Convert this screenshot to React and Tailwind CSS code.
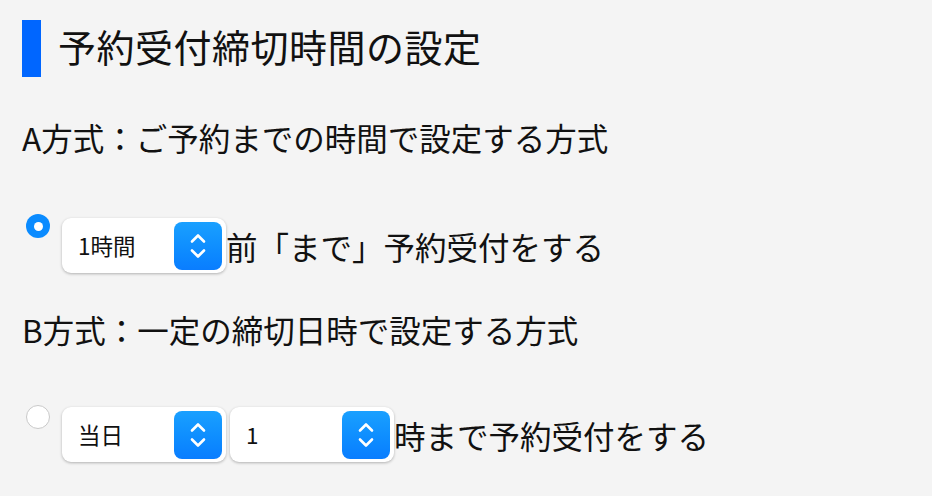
import React from "react";

const FONT = { fontFamily: '"Noto Sans CJK JP", "Noto Sans", sans-serif' };

function Chevrons() {
  return (
    <svg width="16" height="30" viewBox="0 0 16 30" fill="none">
      <path d="M2 10.5 L8 4.5 L14 10.5" stroke="white" strokeWidth="2.6" strokeLinecap="round" strokeLinejoin="round" />
      <path d="M2 19.5 L8 25.5 L14 19.5" stroke="white" strokeWidth="2.6" strokeLinecap="round" strokeLinejoin="round" />
    </svg>
  );
}

function Select({ value }) {
  return (
    <div className="w-[164px] h-[55px] bg-white rounded-[9px] shadow-[0_1px_3px_rgba(0,0,0,0.28)] flex items-center justify-between pl-[16px] pr-[4px]">
      <span className="text-[22.5px] leading-none text-[#111]">{value}</span>
      <div className="w-[48px] h-[48px] rounded-[8px] bg-gradient-to-b from-[#1aa0ff] to-[#0a7dff] flex items-center justify-center">
        <Chevrons />
      </div>
    </div>
  );
}

function Radio({ checked }) {
  return checked ? (
    <div className="w-[24px] h-[24px] rounded-full bg-[#0a8bff] flex items-center justify-center shrink-0 ml-[4px]">
      <div className="w-[9px] h-[9px] rounded-full bg-white" />
    </div>
  ) : (
    <div className="w-[24px] h-[24px] rounded-full bg-white border border-[#c9c9c9] shrink-0 ml-[4px]" />
  );
}

export default function App() {
  return (
    <div className="w-[932px] h-[496px] bg-[#f4f4f4] text-[#111] pt-[20px] pl-[22px] overflow-hidden" style={FONT}>
      <div className="flex items-center h-[57px]">
        <div className="w-[19px] h-[57px] bg-[#0066ff]" />
        <h1 className="ml-[17px] text-[38px] leading-none mb-[5px] tracking-[0.5px]">予約受付締切時間の設定</h1>
      </div>

      <p className="mt-[40px] text-[31.5px] leading-[40px]">A方式：ご予約までの時間で設定する方式</p>

      <div className="mt-[57px] flex items-start">
        <Radio checked />
        <div className="ml-[12px] mt-[4px] flex items-center">
          <Select value="1時間" />
          <span className="text-[31.5px] leading-[40px]">前「まで」予約受付をする</span>
        </div>
      </div>

      <p className="mt-[36px] text-[31.5px] leading-[40px]">B方式：一定の締切日時で設定する方式</p>

      <div className="mt-[56px] flex items-start">
        <Radio />
        <div className="ml-[12px] mt-[2px] flex items-center gap-[4px]">
          <Select value="当日" />
          <Select value="1" />
          <span className="text-[31.5px] leading-[40px] -ml-[4px]">時まで予約受付をする</span>
        </div>
      </div>
    </div>
  );
}
